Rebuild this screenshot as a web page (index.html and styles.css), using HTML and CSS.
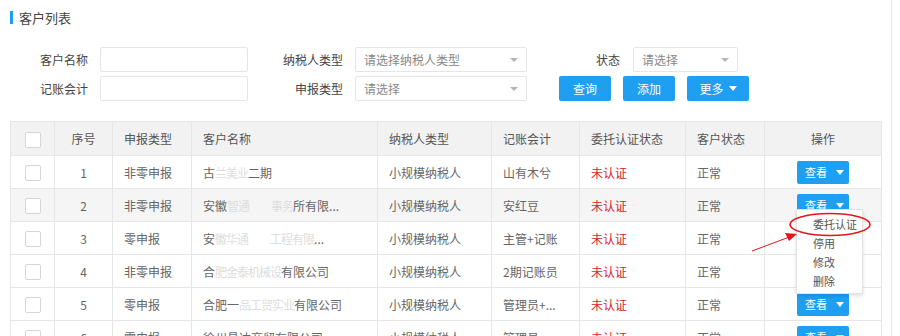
FILE: index.html
```html
<!DOCTYPE html>
<html lang="zh-CN">
<head>
    <meta charset="UTF-8">
    <title>客户列表</title>
    <link rel="stylesheet" href="styles.css">
</head>
<body>
<div class="page">
    <h3 class="title">客户列表</h3>

    <div class="search">
        <div class="search-row">
            <label class="lbl lbl1">客户名称</label>
            <input class="ipt ipt1" type="text">
            <label class="lbl lbl2">纳税人类型</label>
            <div class="sel sel2"><span>请选择纳税人类型</span><i class="caret"></i></div>
            <label class="lbl lbl3">状态</label>
            <div class="sel sel3"><span>请选择</span><i class="caret"></i></div>
        </div>
        <div class="search-row">
            <label class="lbl lbl1">记账会计</label>
            <input class="ipt ipt1" type="text">
            <label class="lbl lbl2">申报类型</label>
            <div class="sel sel2"><span>请选择</span><i class="caret"></i></div>
            <button class="btn btn-query">查询</button>
            <button class="btn">添加</button>
            <button class="btn btn-more">更多 <i class="caret-w"></i></button>
        </div>
    </div>

    <div class="table-wrap">
        <table class="grid">
            <colgroup>
                <col style="width:44px"><col style="width:58px"><col style="width:79px">
                <col style="width:186px"><col style="width:114px"><col style="width:88px">
                <col style="width:106px"><col style="width:79px"><col style="width:117px">
            </colgroup>
            <thead>
                <tr>
                    <th class="c"><span class="chk"></span></th>
                    <th class="c">序号</th>
                    <th>申报类型</th>
                    <th>客户名称</th>
                    <th>纳税人类型</th>
                    <th>记账会计</th>
                    <th>委托认证状态</th>
                    <th>客户状态</th>
                    <th class="c">操作</th>
                </tr>
            </thead>
            <tbody>
                <tr>
                    <td class="c"><span class="chk"></span></td>
                    <td class="c">1</td>
                    <td>非零申报</td>
                    <td>古<span class="blur">兰美业</span>二期</td>
                    <td>小规模纳税人</td>
                    <td>山有木兮</td>
                    <td class="red">未认证</td>
                    <td>正常</td>
                    <td class="c"><span class="op">查看 <i class="caret-w"></i></span></td>
                </tr>
                <tr class="hover">
                    <td class="c"><span class="chk"></span></td>
                    <td class="c">2</td>
                    <td>非零申报</td>
                    <td>安徽<span class="blur">智通</span><span class="gap"></span><span class="blur">事务</span>所有限...</td>
                    <td>小规模纳税人</td>
                    <td>安红豆</td>
                    <td class="red">未认证</td>
                    <td>正常</td>
                    <td class="c"><span class="op">查看 <i class="caret-w"></i></span></td>
                </tr>
                <tr>
                    <td class="c"><span class="chk"></span></td>
                    <td class="c">3</td>
                    <td>零申报</td>
                    <td>安<span class="blur">徽华通</span><span class="gap"></span><span class="blur">工程有限</span>...</td>
                    <td>小规模纳税人</td>
                    <td>主管+记账</td>
                    <td class="red">未认证</td>
                    <td>正常</td>
                    <td class="c"></td>
                </tr>
                <tr>
                    <td class="c"><span class="chk"></span></td>
                    <td class="c">4</td>
                    <td>非零申报</td>
                    <td>合<span class="blur">肥金泰机械设</span>有限公司</td>
                    <td>小规模纳税人</td>
                    <td>2期记账员</td>
                    <td class="red">未认证</td>
                    <td>正常</td>
                    <td class="c"></td>
                </tr>
                <tr>
                    <td class="c"><span class="chk"></span></td>
                    <td class="c">5</td>
                    <td>零申报</td>
                    <td>合肥一<span class="blur">品工贸实业</span>有限公司</td>
                    <td>小规模纳税人</td>
                    <td>管理员+...</td>
                    <td class="red">未认证</td>
                    <td>正常</td>
                    <td class="c"><span class="op">查看 <i class="caret-w"></i></span></td>
                </tr>
                <tr>
                    <td class="c"><span class="chk"></span></td>
                    <td class="c">6</td>
                    <td>零申报</td>
                    <td>徐州昌达商贸有限公司</td>
                    <td>小规模纳税人</td>
                    <td>管理员</td>
                    <td class="red">未认证</td>
                    <td>正常</td>
                    <td class="c"><span class="op">查看 <i class="caret-w"></i></span></td>
                </tr>
            </tbody>
        </table>

        <!-- 操作下拉菜单 -->
        <ul class="menu">
            <li>委托认证</li>
            <li>停用</li>
            <li>修改</li>
            <li>删除</li>
        </ul>
    </div>

    <!-- 标注 -->
    <svg class="mark" width="900" height="336" viewBox="0 0 900 336">
        <ellipse cx="830" cy="224.5" rx="40" ry="11" fill="none" stroke="#e4161b" stroke-width="1.6"/>
        <line x1="752" y1="251" x2="788" y2="237.5" stroke="#e4161b" stroke-width="1"/>
        <polygon points="797,234 785,233 789,241" fill="#e4161b"/>
    </svg>
</div>
</body>
</html>
```

FILE: styles.css
```css
body {
    margin: 0;
    padding: 0;
    font-family: "Noto Sans CJK SC", "Liberation Sans", sans-serif;
    font-size: 12px;
    color: #555;
    background: #fff;
}

.page {
    position: relative;
    width: 892px;
    height: 336px;
    overflow: hidden;
    border-right: 1px solid #e8e8e8;
    padding-left: 10px;
    box-sizing: border-box;
}

.title {
    margin: 0;
    padding-top: 9px;
    height: 16px;
    display: flex;
    align-items: center;
    font-size: 13px;
    font-weight: normal;
    color: #444;
}

.title::before {
    content: "";
    width: 3px;
    height: 13px;
    background: #1e9ff2;
    margin-right: 6px;
}

.search {
    margin-top: 22px;
    display: flex;
    flex-direction: column;
    gap: 4px;
}

.search-row {
    display: flex;
    align-items: center;
    height: 25px;
}

.lbl {
    text-align: right;
    color: #444;
    margin-right: 12px;
    box-sizing: border-box;
}

.lbl1 { width: 78px; }
.lbl2 { width: 95px; }
.lbl3 { width: 93px; margin-right: 13px; }

.ipt, .sel {
    height: 25px;
    border: 1px solid #e6e6e6;
    border-radius: 2px;
    box-sizing: border-box;
    background: #fff;
}

.ipt1 { width: 148px; }

.sel {
    display: flex;
    align-items: center;
    justify-content: space-between;
    padding: 0 8px 0 8px;
    color: #888;
}

.sel2 { width: 172px; }
.sel3 { width: 105px; }

.caret {
    width: 0;
    height: 0;
    border-left: 4px solid transparent;
    border-right: 4px solid transparent;
    border-top: 4px solid #b5b5b5;
}

.btn {
    height: 25px;
    width: 52px;
    border: none;
    border-radius: 2px;
    background: #1e9ff2;
    color: #fff;
    font-family: inherit;
    font-size: 12px;
    padding: 0;
    margin-left: 12px;
    cursor: pointer;
}

.btn-query { margin-left: 32px; }

.btn-more {
    width: 62px;
    display: flex;
    align-items: center;
    justify-content: center;
    gap: 5px;
}

.caret-w {
    display: inline-block;
    width: 0;
    height: 0;
    border-left: 4px solid transparent;
    border-right: 4px solid transparent;
    border-top: 5px solid #fff;
    vertical-align: middle;
}

.table-wrap {
    position: relative;
    margin-top: 20px;
}

.grid {
    width: 871px;
    border-collapse: collapse;
    table-layout: fixed;
}

.grid th, .grid td {
    border: 1px solid #e6e6e6;
    padding: 0 11px;
    text-align: left;
    font-weight: normal;
    white-space: nowrap;
    overflow: hidden;
}

.grid th {
    height: 33px;
    background: #f2f2f2;
    color: #555;
}

.grid td {
    height: 32px;
    color: #666;
}

.grid .c { text-align: center; }

.grid tr.hover td { background: #f5f5f5; }

.grid .red { color: #d9232c; }

.blur {
    color: #ddd;
    letter-spacing: -1px;
}

.gap {
    display: inline-block;
    width: 22px;
}

.chk {
    display: inline-block;
    width: 14px;
    height: 14px;
    border: 1px solid #d6d6d6;
    border-radius: 2px;
    background: #fff;
    vertical-align: middle;
}

.op {
    display: inline-flex;
    align-items: center;
    justify-content: center;
    gap: 9px;
    width: 52px;
    height: 23px;
    border-radius: 2px;
    background: #1e9ff2;
    color: #fff;
    font-size: 11px;
    padding-left: 3px;
    box-sizing: border-box;
}

.menu {
    position: absolute;
    left: 786px;
    top: 88px;
    width: 65px;
    margin: 0;
    padding: 5px 0 2px;
    list-style: none;
    background: #fff;
    border: 1px solid #e2e2e2;
    box-shadow: 0 2px 4px rgba(0, 0, 0, 0.12);
}

.menu li {
    height: 19px;
    line-height: 19px;
    padding-left: 16px;
    font-size: 11px;
    color: #555;
}

.mark {
    position: absolute;
    left: 0;
    top: 0;
    pointer-events: none;
}
```
